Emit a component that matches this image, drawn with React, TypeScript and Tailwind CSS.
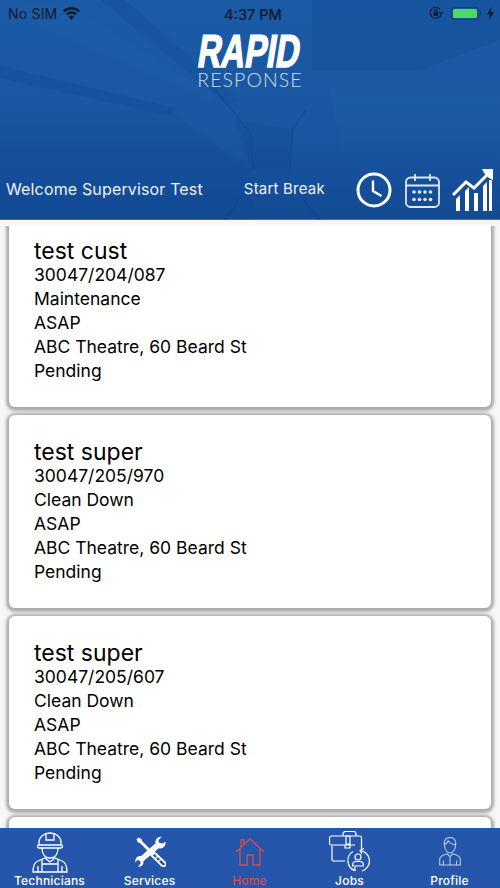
import type { ReactNode } from "react";

const SANS = "font-['Inter','Liberation_Sans',sans-serif]";

interface Job {
  title: string;
  ref: string;
  kind: string;
}

const JOBS: Job[] = [
  { title: "test cust", ref: "30047/204/087", kind: "Maintenance" },
  { title: "test super", ref: "30047/205/970", kind: "Clean Down" },
  { title: "test super", ref: "30047/205/607", kind: "Clean Down" },
  { title: "test super", ref: "30047/205/611", kind: "Clean Down" },
];

// faint tunnel photo behind the header
function HeaderArt() {
  return (
    <svg className="absolute inset-0" width="500" height="220" viewBox="0 0 500 220" aria-hidden="true">
      <polygon points="312,0 500,0 500,40 420,70 312,70" fill="#0f4a93" opacity="0.3" />
      <polygon points="100,0 125,0 240,100 228,105" fill="#0f4c98" opacity="0.3" />
      <polygon points="0,10 60,0 215,95 210,100" fill="#2a68b0" opacity="0.12" />
      <polygon points="0,66 0,78 170,116 175,108" fill="#0e4a94" opacity="0.35" />
      <polygon points="0,110 170,110 250,170 255,220 0,220" fill="#0e468f" opacity="0.2" />
      <polygon points="235,120 252,170 288,170 295,130" fill="#10498f" opacity="0.25" />
      <polygon points="330,90 500,90 500,150 340,150" fill="#2a68b0" opacity="0.12" />
      <path d="M215 90 250 132 253 170M306 110 292 130 290 170M225 220 255 177M285 177 320 220" fill="none" stroke="#0d4288" strokeWidth="1.5" opacity="0.35" />
    </svg>
  );
}

function StatusBar() {
  return (
    <div className="relative flex h-[26px] items-center justify-between pl-2 pr-[6px] text-[14px] text-[#0c1a2d]">
      <div className="flex items-center gap-[6px]">
        <span className="tracking-[0.2px]">No SIM</span>
        <svg width="17" height="13" viewBox="0 0 17 13" fill="#0c1a2d">
          <path d="M8.500 0C5.200 0 2.300 1.300 0 3.400l1.700 1.800C3.500 3.500 5.900 2.500 8.500 2.500s5 1 6.800 2.700L17 3.400C14.700 1.300 11.800 0 8.500 0z" />
          <path d="M8.500 4.300c-2.100 0-4 .8-5.400 2.200l1.700 1.800c1-1 2.300-1.500 3.700-1.500s2.700.5 3.700 1.500l1.700-1.800c-1.400-1.400-3.300-2.200-5.400-2.200z" />
          <path d="M8.500 8.500c-1 0-1.900.4-2.600 1.100L8.500 13l2.600-3.400c-.7-.7-1.600-1.100-2.600-1.100z" />
        </svg>
      </div>
      <span className="absolute left-[224px] top-[4px] text-[14.500px] font-medium">4:37 PM</span>
      <div className="flex items-center">
        <svg width="14" height="14" viewBox="0 0 14 14" fill="none" stroke="#0c1a2d" strokeWidth="1.100">
          <path d="M12 8.500A5.500 5.500 0 1 1 10.800 3" />
          <path d="M13.600 5.500 12 8 10 6" />
          <rect x="4.500" y="6.300" width="4.600" height="3.500" fill="#0c1a2d" stroke="none" />
          <path d="M5.400 6.300V5a1.400 1.400 0 0 1 2.800 0v1.300" />
        </svg>
        <div className="ml-[8px] flex items-center">
          <div className="h-[13px] w-[28px] rounded-[3px] border border-[#123a6c] p-[1px]">
            <div className="h-full w-full rounded-[1.500px] bg-[#4cd964]" />
          </div>
          <div className="ml-[1px] h-[4px] w-[1.500px] rounded-r-sm bg-[#123a6c]" />
        </div>
        <svg className="ml-[6px]" width="7" height="13" viewBox="0 0 7 13" fill="#0c1a2d">
          <path d="M4.500 0 0 7.500h2.800L2 13l5-8H4z" />
        </svg>
      </div>
    </div>
  );
}

function Logo() {
  return (
    <div className="flex w-[104px] flex-col items-center text-white">
      <span className="font-['Liberation_Sans',sans-serif] text-[46px] leading-[38px] font-bold whitespace-nowrap [-webkit-text-stroke:1.500px_white] [transform:skewX(-9deg)_scaleX(0.71)]">
        RAPID
      </span>
      <span className="font-['Lato',sans-serif] text-[19.500px] leading-[19px] font-light tracking-[1.100px] text-[#d5e0ee]">
        RESPONSE
      </span>
    </div>
  );
}

function ClockIcon() {
  return (
    <svg width="36" height="36" viewBox="0 0 36 36" fill="none" stroke="white" strokeWidth="3">
      <circle cx="18" cy="18" r="16" />
      <path d="M17 8.500V19l8.500 5" strokeWidth="2.400" />
    </svg>
  );
}

function CalendarIcon() {
  const cols = [9, 14.5, 20, 25.5];
  return (
    <svg width="35" height="34" viewBox="0 0 35 34" fill="none" stroke="#dfe8f4" strokeWidth="1.800">
      <rect x="1" y="3.500" width="33" height="29.500" rx="4.500" />
      <path d="M1 11.500h33M10 0v7M25 0v7" />
      <g fill="#dfe8f4" stroke="none">
        {cols.map((x) => (
          <circle key={`a${x}`} cx={x} cy="18" r="1.800" />
        ))}
        {cols.map((x) => (
          <circle key={`b${x}`} cx={x} cy="25.500" r="1.800" />
        ))}
      </g>
    </svg>
  );
}

function ChartIcon() {
  return (
    <svg width="42" height="42" viewBox="0 0 42 42" fill="white">
      <path d="M1 26 14 13l8 6L36 5" fill="none" stroke="white" strokeWidth="3" />
      <path d="M30 0h11v11l-4-2-5-5z" />
      <path d="M4 30l4-4v16H4zM13 22l4-4v24h-4zM22 24l4 0v18h-4zM31 17l4-4v29h-4zM37 11h3v31h-3z" />
    </svg>
  );
}

function TechIcon() {
  return (
    <svg width="36" height="42" viewBox="0 0 36 42" fill="none" stroke="white" strokeWidth="1.300">
      <path d="M7 14V11a11 9 0 0 1 22 0v3" />
      <path d="M14 2.500V9h8V2.500" />
      <rect x="5.500" y="14" width="25" height="3" rx="1.500" />
      <path d="M10 17c0 6 3 10 8 10s8-4 8-10" />
      <path d="M1 41c0-7 2-10 5-11l7-3 5 4 5-4 7 3c3 1 5 4 5 11z" />
      <path d="M10 41v-8h16v8M10 33v-5M26 33v-5M6 41v-6M30 41v-6" />
    </svg>
  );
}

function ToolsIcon() {
  return (
    <svg width="31" height="31" viewBox="0 0 31 31" fill="none">
      {/* screwdriver */}
      <path d="M3.500 1.500 1.500 3.500 3 6.500l2 .5 10.500 10.500 2-2L7 5 6.500 3z" fill="white" />
      <path d="M16.500 19.500l3-3L30 26.500c.9 1 .9 2.300 0 3.200s-2.300.9-3.200 0z" stroke="white" strokeWidth="1.800" />
      <path d="M20.500 22.500l3-3M23.500 25.500l3-3" stroke="white" strokeWidth="1.200" />
      {/* wrench */}
      <path d="M30.500 6c.7 3.800-2.700 7.300-6.700 6.300L8.300 25.300c.8 3.500-2 6-5.500 5.200l3-3-.8-2.800-2.800-.8-1.700 2.500C-.5 22.500 2.500 19.200 6.200 20L20.600 7.300C19.600 3.500 23 .2 26.800.7l-3.300 3.200.7 2.800 2.800.7z" fill="white" />
    </svg>
  );
}

function HomeIcon() {
  return (
    <svg width="30" height="29" viewBox="0 0 30 29" fill="none" stroke="#d14f4f" strokeWidth="1.400">
      <path d="M1 15 15 2l14 13" />
      <path d="M5 12v16h7V18h6v10h7V12" />
      <path d="M6 10V3h3v4" />
    </svg>
  );
}

function JobsIcon() {
  return (
    <svg width="42" height="42" viewBox="0 0 42 42" fill="none" stroke="white" strokeWidth="1.200">
      <path d="M14 5V3a2.500 2.500 0 0 1 2.500-2.500h8a2.500 2.500 0 0 1 2.500 2.500v2" />
      <path d="M15.500 14h-13a2 2 0 0 1-2-2V7A2 2 0 0 1 2.500 5h28A2 2 0 0 1 32.500 7v11" />
      <path d="M3 15v13a2 2 0 0 0 2 2h11M21 14h5" />
      <path d="M17 5h4v8h-4zM16 14h5v3h-5z" />
      <path d="M31 19.500a10.500 10.500 0 0 1 2 20.500M26 39.500a10.500 10.500 0 0 1-2-19" />
      <path d="M35 17.500l-4 2 2 3.500M22 38l4 1.500 0-3.500" />
      <circle cx="29" cy="26" r="3" />
      <path d="M23.500 35c0-3 1.500-4.500 3.500-4.500h4c2 0 3.500 1.500 3.500 4.500z" />
    </svg>
  );
}

function ProfileIcon() {
  return (
    <svg width="24" height="29" viewBox="0 0 24 31" fill="none" stroke="#c3d0e6" strokeWidth="1.100">
      <path d="M6 8c0 5 3 9 6 9s6-4 6-9" />
      <path d="M6 8C5 3 9 .5 12 .5S19 3 18 8c-3 0-6-1-8-4-1 2-2 4-4 4z" />
      <path d="M1 30v-6c0-3 2-4 5-5l3-1 3 3 3-3 3 1c3 1 5 2 5 5v6z" />
      <path d="M12 21v9M5 30v-5M19 30v-5" />
    </svg>
  );
}

function JobCard({ job }: { job: Job }) {
  const lines = [job.ref, job.kind, "ASAP", "ABC Theatre, 60 Beard St", "Pending"];
  return (
    <div className="h-[193px] shrink-0 rounded-[6px] bg-white pl-[25px] pt-[23px] text-black shadow-[0_1px_3px_3px_rgba(140,140,140,0.7)]">
      <div className="text-[23px] leading-[28px]">{job.title}</div>
      <div className="-mt-[2px] text-[17.500px] leading-[24px]">
        {lines.map((line) => (
          <div key={line}>{line}</div>
        ))}
      </div>
    </div>
  );
}

function Tab({ icon, label, active }: { icon: ReactNode; label: string; active?: boolean }) {
  return (
    <div className="flex h-full flex-1 flex-col items-center">
      <div className="flex h-[45px] items-center justify-center pt-[2px]">{icon}</div>
      <span className={`-ml-[1px] text-[12px] leading-[15px] font-medium tracking-[0.2px] ${active ? "text-[#d14f4f]" : "text-white"}`}>
        {label}
      </span>
    </div>
  );
}

export default function App() {
  return (
    <div className={`flex h-[888px] w-[500px] flex-col overflow-hidden bg-[#f7f7f7] ${SANS}`}>
      <header className="relative flex h-[220px] shrink-0 flex-col border-b border-[#3d72b8] bg-[#174f9b] bg-[linear-gradient(180deg,#1b5aa5_0%,#1a57a2_55%,#134a94_100%)]">
        <HeaderArt />
        <div className="relative flex h-full flex-col">
          <StatusBar />
          <div className="flex justify-center pt-[6px]">
            <Logo />
          </div>
          <div className="mt-auto flex items-end pb-[8px] pl-[6px] pr-[6px] text-[#eef3fa]">
            <span className="mb-[12px] text-[16px] leading-[20px] tracking-[0.15px]">Welcome Supervisor Test</span>
            <span className="mb-[12px] ml-[41px] text-[15px] leading-[20px] tracking-[0.2px]">Start Break</span>
            <div className="ml-auto flex items-end gap-[12px]">
              <div className="flex items-end gap-[13px] pb-[3px]">
                <ClockIcon />
                <CalendarIcon />
              </div>
              <ChartIcon />
            </div>
          </div>
        </div>
      </header>
      <main className="mt-[6px] min-h-0 flex-1 overflow-hidden">
        <div className="-mt-[12px] flex flex-col gap-[8px] px-[9px]">
          {JOBS.map((job) => (
            <JobCard key={job.ref} job={job} />
          ))}
        </div>
      </main>
      <nav className="flex h-[60px] shrink-0 bg-[#2656ab]">
        <Tab icon={<TechIcon />} label="Technicians" />
        <Tab icon={<ToolsIcon />} label="Services" />
        <Tab icon={<HomeIcon />} label="Home" active />
        <Tab icon={<JobsIcon />} label="Jobs" />
        <Tab icon={<ProfileIcon />} label="Profile" />
      </nav>
    </div>
  );
}
